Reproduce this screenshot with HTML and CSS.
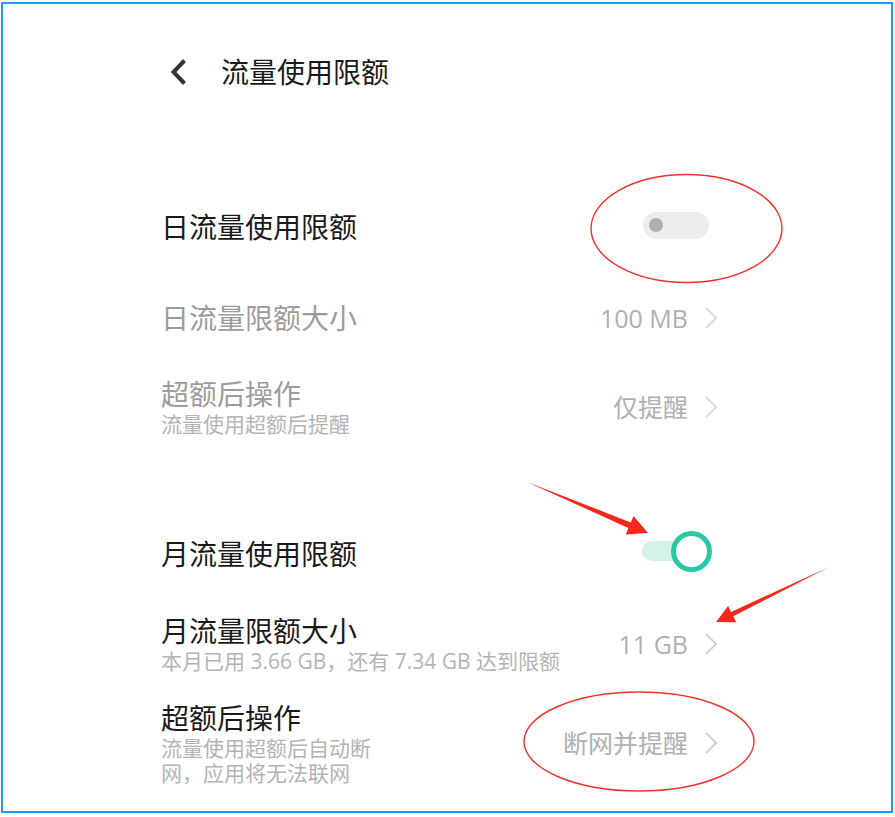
FILE: index.html
```html
<!DOCTYPE html>
<html lang="zh-CN">
<head>
    <meta charset="UTF-8">
    <meta name="viewport" content="width=device-width, initial-scale=1.0">
    <title>流量使用限额</title>
    <link rel="stylesheet" href="styles.css">
</head>
<body>
    <div class="frame">
        <div class="header">
            <svg class="back" width="17" height="28" viewBox="0 0 17 28">
                <polyline points="14.5,2.5 3.5,14 14.5,25.5" fill="none" stroke="#333" stroke-width="4"/>
            </svg>
            <div class="page-title">流量使用限额</div>
        </div>

        <div class="row row-day">
            <div class="text">
                <div class="label">日流量使用限额</div>
            </div>
            <div class="switch switch-off"><span class="knob"></span></div>
        </div>

        <div class="row row-day-size disabled">
            <div class="text">
                <div class="label">日流量限额大小</div>
            </div>
            <div class="value">100 MB</div>
            <svg class="arrow" width="12" height="22" viewBox="0 0 12 22"><polyline points="1,1 11,11 1,21" fill="none" stroke="#d4d4d4" stroke-width="1.6"/></svg>
        </div>

        <div class="row row-day-action disabled">
            <div class="text">
                <div class="label">超额后操作</div>
                <div class="sub">流量使用超额后提醒</div>
            </div>
            <div class="value">仅提醒</div>
            <svg class="arrow" width="12" height="22" viewBox="0 0 12 22"><polyline points="1,1 11,11 1,21" fill="none" stroke="#d4d4d4" stroke-width="1.6"/></svg>
        </div>

        <div class="row row-month">
            <div class="text">
                <div class="label">月流量使用限额</div>
            </div>
            <div class="switch switch-on"><span class="track"></span><span class="knob"></span></div>
        </div>

        <div class="row row-month-size">
            <div class="text">
                <div class="label">月流量限额大小</div>
                <div class="sub">本月已用 3.66 GB，还有 7.34 GB 达到限额</div>
            </div>
            <div class="value">11 GB</div>
            <svg class="arrow" width="12" height="22" viewBox="0 0 12 22"><polyline points="1,1 11,11 1,21" fill="none" stroke="#c8c8c8" stroke-width="1.6"/></svg>
        </div>

        <div class="row row-month-action">
            <div class="text narrow">
                <div class="label">超额后操作</div>
                <div class="sub">流量使用超额后自动断网，应用将无法联网</div>
            </div>
            <div class="value">断网并提醒</div>
            <svg class="arrow" width="12" height="22" viewBox="0 0 12 22"><polyline points="1,1 11,11 1,21" fill="none" stroke="#c8c8c8" stroke-width="1.6"/></svg>
        </div>
    </div>

    <!-- red annotation marks drawn over the screen -->
    <svg class="marks" width="895" height="817" viewBox="0 0 895 817">
        <ellipse cx="686.5" cy="228.5" rx="95.5" ry="54" fill="none" stroke="#f2302a" stroke-width="1.4"/>
        <ellipse cx="639" cy="741.5" rx="115" ry="49.5" fill="none" stroke="#f2302a" stroke-width="1.4"/>
        <polygon points="527,482 628.4,528 625.7,534.4 648,533 633.5,516 630.8,522.4" fill="#f5281c"/>
        <polygon points="829,567 733.2,616.3 736.1,622.2 716,622 728.1,606 731,611.9" fill="#f5281c"/>
    </svg>
</body>
</html>
```

FILE: styles.css
```css
body {
    margin: 0;
    background: #fff;
    font-family: "Open Sans", "Noto Sans CJK SC", sans-serif;
    position: relative;
}
.frame {
    box-sizing: border-box;
    width: 892px;
    height: 811px;
    margin: 2px 0 0 1px;
    border: 2px solid #1f9bf0;
    background: #fff;
    overflow: hidden;
}
.header {
    display: flex;
    align-items: center;
    height: 36px;
    padding: 50px 0 0 167px;
}
.header .back {
    margin-right: 34px;
}
.page-title {
    font-size: 28px;
    line-height: 36px;
    color: #1a1a1a;
}
.row {
    display: flex;
    align-items: center;
    padding: 0 174px 0 158px;
}
.row .text {
    flex: 1;
}
.row .text.narrow {
    flex: none;
    width: 222px;
    margin-right: auto;
}
.label {
    font-size: 28px;
    line-height: 36px;
    color: #1a1a1a;
    white-space: nowrap;
}
.sub {
    font-size: 21px;
    line-height: 25px;
    color: #b4b4b4;
}
.disabled .label {
    color: #9c9c9c;
}
.value {
    font-size: 25px;
    line-height: 36px;
    color: #b0b0b0;
    margin-right: 17px;
}
.arrow {
    display: block;
}

.row-day { margin-top: 119px; }
.row-day-size { margin-top: 55px; }
.row-day-action { margin-top: 40px; }
.row-month { margin-top: 99px; }
.row-month-size { margin-top: 41px; }
.row-month-action { margin-top: 26px; }

.switch {
    position: relative;
    height: 36px;
}
.switch-off {
    width: 66px;
    margin-right: 8px;
}
.switch-off::before {
    content: "";
    position: absolute;
    left: 0;
    top: 3px;
    width: 66px;
    height: 27px;
    border-radius: 14px;
    background: #ededed;
}
.switch-off .knob {
    position: absolute;
    left: 6px;
    top: 9px;
    width: 14px;
    height: 14px;
    border-radius: 50%;
    background: #adadad;
}
.switch-on {
    width: 70px;
    margin-right: 5px;
}
.switch-on .track {
    position: absolute;
    left: 0;
    top: 5px;
    width: 58px;
    height: 20px;
    border-radius: 10px;
    background: #d3f0e9;
}
.switch-on .knob {
    position: absolute;
    right: 0;
    top: -5px;
    box-sizing: border-box;
    width: 41px;
    height: 41px;
    border-radius: 50%;
    border: 5px solid #27c9a5;
    background: #fff;
}
.marks {
    position: absolute;
    top: 0;
    left: 0;
}
```
